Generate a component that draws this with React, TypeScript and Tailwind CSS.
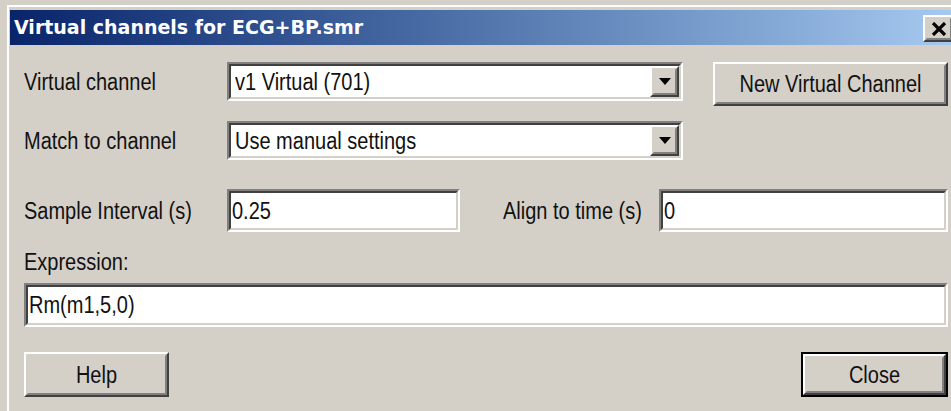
import React from "react";

const FACE = "bg-[#d4d0c8]";

// Dialog text is drawn slightly taller than Arial's proportions
function T({ children }: { children: React.ReactNode }) {
  return <span className="inline-block scale-y-[1.15]">{children}</span>;
}

function Sunken({ className = "", children }: { className?: string; children?: React.ReactNode }) {
  return (
    <div className={`border-2 border-t-[#808080] border-l-[#808080] border-b-white border-r-white ${className}`}>
      <div className="h-full border-2 border-t-[#404040] border-l-[#404040] border-b-[#d4d0c8] border-r-[#d4d0c8] bg-white flex items-center">
        {children}
      </div>
    </div>
  );
}

function Raised({ className = "", children }: { className?: string; children?: React.ReactNode }) {
  return (
    <div className={`border-2 border-t-white border-l-white border-b-[#404040] border-r-[#404040] ${FACE} ${className}`}>
      <div className="h-full border-2 border-t-[#d4d0c8] border-l-[#d4d0c8] border-b-[#808080] border-r-[#808080] flex items-center justify-center">
        {children}
      </div>
    </div>
  );
}

function Combo({ value }: { value: string }) {
  return (
    <Sunken className="w-[456px] h-[39px]">
      <span className="flex-1 pl-[4px] pt-[1px]">
        <T>{value}</T>
      </span>
      <Raised className="w-[29px] h-full">
        <svg width="12" height="7" viewBox="0 0 12 7">
          <polygon points="0,0 12,0 6,7" fill="#000" />
        </svg>
      </Raised>
    </Sunken>
  );
}

export default function App() {
  return (
    <div className="relative w-[951px] h-[411px] overflow-hidden bg-[#d4d0c8] pt-[5px] pl-[7px] font-['Liberation_Sans',Arial,sans-serif] text-[20px] text-[#111]">
      <div className="w-[960px] h-[420px] border-t-2 border-l-2 border-white pt-[3px] pl-[1px]">
        {/* caption bar */}
        <div className="h-[35px] w-[946px] flex items-center justify-between bg-gradient-to-r from-[#0a246a] to-[#a6caf0]">
          <span className="pl-[4px] text-white font-bold text-[19px] font-['DejaVu_Sans',Verdana,sans-serif]">
            Virtual channels for ECG+BP.smr
          </span>
          <Raised className="shrink-0 w-[31px] h-[27px] mr-[2px] mt-[2px]">
            <svg width="16" height="14" viewBox="0 0 16 14">
              <path d="M2 1 L14 13 M14 1 L2 13" stroke="#000" strokeWidth="3.2" />
            </svg>
          </Raised>
        </div>

        {/* dialog body */}
        <div className="pl-[14px] pt-[17px] w-[924px] box-content">
          <div className="flex items-start h-[44px]">
            <div className="w-[203px] h-[39px] flex items-center">
              <T>Virtual channel</T>
            </div>
            <Combo value="v1 Virtual (701)" />
            <Raised className="ml-[30px] w-[235px] h-[44px]">
              <T>New Virtual Channel</T>
            </Raised>
          </div>

          <div className="flex items-start mt-[15px]">
            <div className="w-[203px] h-[39px] flex items-center">
              <T>Match to channel</T>
            </div>
            <Combo value="Use manual settings" />
          </div>

          <div className="flex items-center mt-[29px] h-[43px]">
            <div className="w-[203px]">
              <T>Sample Interval (s)</T>
            </div>
            <Sunken className="w-[233px] h-[43px]">
              <span className="pl-[1px]">
                <T>0.25</T>
              </span>
            </Sunken>
            <div className="ml-[43px] w-[156px]">
              <T>Align to time (s)</T>
            </div>
            <Sunken className="w-[289px] h-[43px]">
              <span className="pl-[1px]">
                <T>0</T>
              </span>
            </Sunken>
          </div>

          <div className="mt-[15px] h-[36px] flex items-start">
            <T>Expression:</T>
          </div>

          <Sunken className="w-[924px] h-[44px]">
            <span className="pl-[1px]">
              <T>Rm(m1,5,0)</T>
            </span>
          </Sunken>

          <div className="flex justify-between mt-[25px]">
            <Raised className="w-[145px] h-[45px]">
              <T>Help</T>
            </Raised>
            <div className="border-2 border-black">
              <Raised className="w-[143px] h-[41px]">
                <T>Close</T>
              </Raised>
            </div>
          </div>
        </div>
      </div>
    </div>
  );
}
